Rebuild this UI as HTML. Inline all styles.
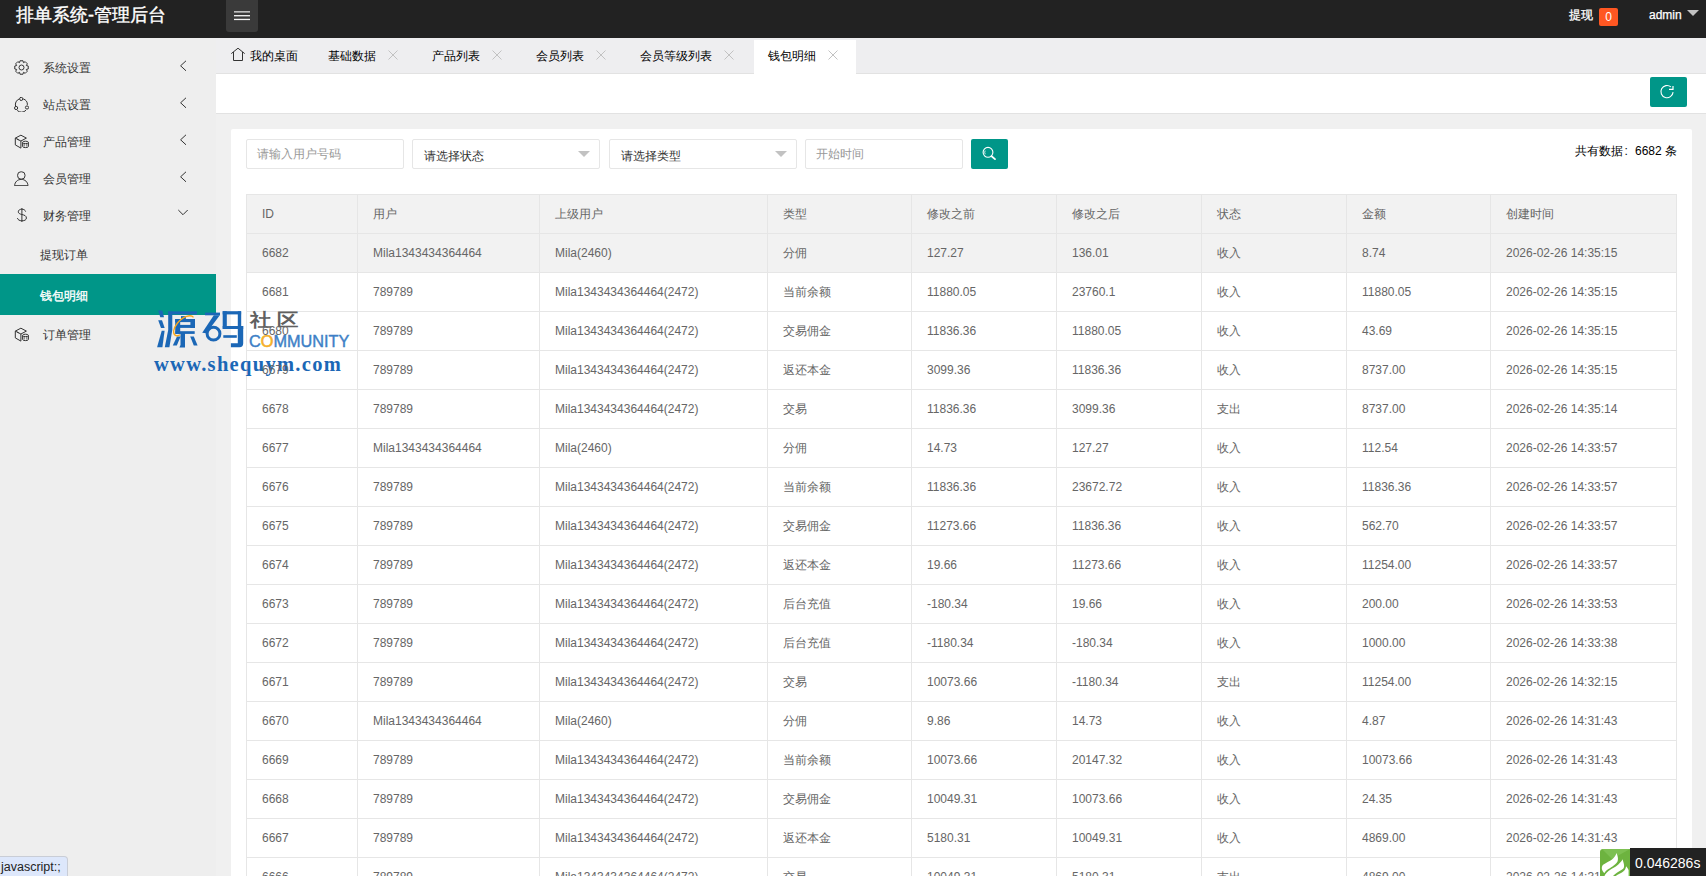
<!DOCTYPE html>
<html><head><meta charset="utf-8">
<style>
*{margin:0;padding:0;box-sizing:border-box}
html,body{width:1706px;height:876px;overflow:hidden}
body{position:relative;background:#f0f0f0;font-family:"Liberation Sans",sans-serif;font-size:12px;color:#333}
.a{position:absolute}
#hdr{position:absolute;left:0;top:0;width:1706px;height:38px;background:#222}
#side{position:absolute;left:0;top:38px;width:216px;height:838px;background:#eee}
#tabs{position:absolute;left:216px;top:38px;width:1490px;height:36px;background:#eeeef0;border-bottom:1px solid #e2e2e2}
#strip{position:absolute;left:216px;top:74px;width:1490px;height:40px;background:#fff;border-bottom:1px solid #e2e2e2}
#card{position:absolute;left:231px;top:129px;width:1461px;height:760px;background:#fff;border-radius:2px}
.mi{position:absolute;left:0;width:216px;height:37px;line-height:37px;color:#333;font-size:12px}
.mi span{position:absolute;left:43px}
.mi svg{position:absolute}
.tab{position:absolute;top:41px;height:33px;line-height:31px;color:#000;font-size:12px}
.inp{position:absolute;top:139px;height:30px;border:1px solid #e6e6e6;border-radius:2px;background:#fff;line-height:28px;font-size:12px}
.sel{line-height:32px}
.thbg{position:absolute;background:#f2f2f2}
.hl{position:absolute;height:1px;background:#e6e6e6}
.vl{position:absolute;width:1px;background:#e6e6e6}
.c{position:absolute;z-index:6;height:38px;line-height:38px;color:#666;font-size:12px;white-space:nowrap}
</style></head><body>
<div id="hdr">
  <div class="a" style="left:16px;top:0;height:30px;line-height:30px;font-size:18px;color:#fff;white-space:nowrap;-webkit-text-stroke:0.4px #fff">排单系统-管理后台</div>
  <div class="a" style="left:226px;top:0;width:32px;height:32px;background:#3a3a3a;border-radius:0 0 3px 3px"></div>
  <svg class="a" style="left:234px;top:10px" width="16" height="12" viewBox="0 0 16 12"><rect x="0" y="1.2" width="16" height="1.3" fill="#e0e0e0"/><rect x="0" y="5" width="16" height="1.4" fill="#eee"/><rect x="0" y="8.8" width="16" height="1.3" fill="#f4f4f4"/></svg>
  <div class="a" style="left:1569px;top:7px;line-height:16px;font-size:12px;color:#fff;-webkit-text-stroke:0.3px #fff">提现</div>
  <div class="a" style="left:1599px;top:8px;width:19px;height:18px;background:#ff5722;border-radius:2px;color:#fff;text-align:center;line-height:18px;font-size:12px">0</div>
  <div class="a" style="left:1649px;top:7px;line-height:16px;font-size:12px;color:#fff;-webkit-text-stroke:0.25px #fff">admin</div>
  <svg class="a" style="left:1687px;top:10px" width="12" height="6" viewBox="0 0 12 6"><path d="M0 0H12L6 6Z" fill="#c2c2c2"/></svg>
</div>
<div id="side">
<div class="mi" style="top:10px"><svg style="left:14px;top:12px" width="15" height="15" viewBox="0 0 15 15"><path d="M5.52 2.69 L5.99 0.77 L9.01 0.77 L9.48 2.69 L9.50 2.70 L11.20 1.67 L13.33 3.80 L12.30 5.50 L12.31 5.52 L14.23 5.99 L14.23 9.01 L12.31 9.48 L12.30 9.50 L13.33 11.20 L11.20 13.33 L9.50 12.30 L9.48 12.31 L9.01 14.23 L5.99 14.23 L5.52 12.31 L5.50 12.30 L3.80 13.33 L1.67 11.20 L2.70 9.50 L2.69 9.48 L0.77 9.01 L0.77 5.99 L2.69 5.52 L2.70 5.50 L1.67 3.80 L3.80 1.67 L5.50 2.70Z" fill="none" stroke="#333" stroke-width="1" stroke-linejoin="round"/><circle cx="7.5" cy="7.5" r="2.5" fill="none" stroke="#333" stroke-width="1"/></svg><span style="top:2px">系统设置</span><svg style="left:179px;top:12px" width="8" height="12" viewBox="0 0 8 12"><path d="M7 0.8L1.6 5.8L7 10.8" fill="none" stroke="#333" stroke-width="1"/></svg></div><div class="mi" style="top:47px"><svg style="left:14px;top:12px" width="15" height="15" viewBox="0 0 15 15"><path d="M9.2 1.9A6.1 6.1 0 0 1 13.4 7.9 M12.0 13.2A6.1 6.1 0 0 1 3.2 13.4 M1.6 9.3A6.1 6.1 0 0 1 5.3 1.9" fill="none" stroke="#333" stroke-width="1"/><circle cx="7.2" cy="1.9" r="1.6" fill="none" stroke="#333" stroke-width="1"/><circle cx="2.1" cy="11" r="1.6" fill="none" stroke="#333" stroke-width="1"/><circle cx="13" cy="10.5" r="1.6" fill="none" stroke="#333" stroke-width="1"/></svg><span style="top:2px">站点设置</span><svg style="left:179px;top:12px" width="8" height="12" viewBox="0 0 8 12"><path d="M7 0.8L1.6 5.8L7 10.8" fill="none" stroke="#333" stroke-width="1"/></svg></div><div class="mi" style="top:84px"><svg style="left:14px;top:12px" width="15" height="15" viewBox="0 0 15 15"><path d="M6.9 1.2L12.4 4.1L6.9 7.0L1.3 4.1Z M1.3 4.1V10.9L6.9 14.1V7.0 M3.2 5.1L4.6 5.8" fill="none" stroke="#333" stroke-width="1" stroke-linejoin="round"/><path d="M8.6 8.4V12.4A2.9 1.2 0 0 0 14.4 12.4V8.4" fill="#eee" stroke="#333" stroke-width="1"/><ellipse cx="11.5" cy="8.4" rx="2.9" ry="1.2" fill="#eee" stroke="#333" stroke-width="1"/><path d="M10.2 9.6V12.5M12.8 9.6V12.5" stroke="#333" stroke-width="0.7"/></svg><span style="top:2px">产品管理</span><svg style="left:179px;top:12px" width="8" height="12" viewBox="0 0 8 12"><path d="M7 0.8L1.6 5.8L7 10.8" fill="none" stroke="#333" stroke-width="1"/></svg></div><div class="mi" style="top:121px"><svg style="left:14px;top:12px" width="15" height="15" viewBox="0 0 15 15"><rect x="3.6" y="0.8" width="7.4" height="7.3" rx="3.3" fill="none" stroke="#333" stroke-width="1"/><path d="M0.6 14.7C0.8 10.9 3.6 8.4 7.3 8.4S13.8 10.9 14 14.7Z" fill="none" stroke="#333" stroke-width="1" stroke-linejoin="round"/></svg><span style="top:2px">会员管理</span><svg style="left:179px;top:12px" width="8" height="12" viewBox="0 0 8 12"><path d="M7 0.8L1.6 5.8L7 10.8" fill="none" stroke="#333" stroke-width="1"/></svg></div><div class="mi" style="top:158px"><svg style="left:15px;top:12px" width="15" height="15" viewBox="0 0 15 15"><path d="M10.6 3.6C10.2 2 8.8 1.2 6.8 1.2C4.6 1.2 3.3 2.3 3.3 3.8C3.3 5.4 4.8 6 6.9 6.5C9.6 7.1 11.4 7.9 11.4 10C11.4 11.8 9.7 12.8 6.9 12.8C4.5 12.8 2.8 11.7 2.4 10.1 M6.9 0V14" fill="none" stroke="#333" stroke-width="1"/></svg><span style="top:2px">财务管理</span><svg style="left:177px;top:13px" width="12" height="8" viewBox="0 0 12 8"><path d="M1.3 1L6 5.7L10.7 1" fill="none" stroke="#333" stroke-width="1"/></svg></div><div class="mi" style="top:195px;height:41px;line-height:41px"><span style="left:40px;top:2px">提现订单</span></div><div class="mi" style="top:236px;height:41px;line-height:41px;background:#009688;color:#fff"><span style="left:40px;top:2px;-webkit-text-stroke:0.35px #fff">钱包明细</span></div><div class="mi" style="top:277px"><svg style="left:14px;top:12px" width="15" height="15" viewBox="0 0 15 15"><path d="M6.9 1.2L12.4 4.1L6.9 7.0L1.3 4.1Z M1.3 4.1V10.9L6.9 14.1V7.0 M3.2 5.1L4.6 5.8" fill="none" stroke="#333" stroke-width="1" stroke-linejoin="round"/><path d="M8.6 8.4V12.4A2.9 1.2 0 0 0 14.4 12.4V8.4" fill="#eee" stroke="#333" stroke-width="1"/><ellipse cx="11.5" cy="8.4" rx="2.9" ry="1.2" fill="#eee" stroke="#333" stroke-width="1"/><path d="M10.2 9.6V12.5M12.8 9.6V12.5" stroke="#333" stroke-width="0.7"/></svg><span style="top:2px">订单管理</span></div>
</div>
<div id="tabs"></div>
<div class="a" style="left:754px;top:40px;width:102px;height:35px;background:#fff"></div>
<svg class="a" style="left:231px;top:47px" width="15" height="15" viewBox="0 0 15 15"><path d="M0.3 6.6L7 1.2L13.7 6.6 M2.5 5V13.5H11.5V5" fill="none" stroke="#333" stroke-width="1"/></svg>
<div class="tab" style="left:250px">我的桌面</div>
<div class="tab" style="left:328px">基础数据</div>
<div class="tab" style="left:432px">产品列表</div>
<div class="tab" style="left:536px">会员列表</div>
<div class="tab" style="left:640px">会员等级列表</div>
<div class="tab" style="left:768px">钱包明细</div>
<svg class="a" style="left:388px;top:50px" width="10" height="10" viewBox="0 0 10 10"><path d="M0.5 0.5L9.5 9.5M9.5 0.5L0.5 9.5" stroke="#c2c2c2" stroke-width="1"/></svg>
<svg class="a" style="left:492px;top:50px" width="10" height="10" viewBox="0 0 10 10"><path d="M0.5 0.5L9.5 9.5M9.5 0.5L0.5 9.5" stroke="#c2c2c2" stroke-width="1"/></svg>
<svg class="a" style="left:596px;top:50px" width="10" height="10" viewBox="0 0 10 10"><path d="M0.5 0.5L9.5 9.5M9.5 0.5L0.5 9.5" stroke="#c2c2c2" stroke-width="1"/></svg>
<svg class="a" style="left:724px;top:50px" width="10" height="10" viewBox="0 0 10 10"><path d="M0.5 0.5L9.5 9.5M9.5 0.5L0.5 9.5" stroke="#c2c2c2" stroke-width="1"/></svg>
<svg class="a" style="left:828px;top:50px" width="10" height="10" viewBox="0 0 10 10"><path d="M0.5 0.5L9.5 9.5M9.5 0.5L0.5 9.5" stroke="#c2c2c2" stroke-width="1"/></svg>
<div id="strip"></div>
<div class="a" style="left:1650px;top:77px;width:37px;height:30px;background:#009688;border-radius:2px"></div>
<svg class="a" style="left:1659px;top:84px" width="16" height="16" viewBox="0 0 16 16"><path d="M11.92 2.93A6.1 6.1 0 1 0 14.08 8.13" fill="none" stroke="#fff" stroke-width="1.1"/><path d="M14 2V5.4H10" fill="none" stroke="#fff" stroke-width="1.2"/></svg>
<div id="card"></div>
<div class="inp" style="left:246px;width:158px;color:#999;padding-left:10px">请输入用户号码</div>
<div class="inp sel" style="left:412px;width:188px;color:#333;padding-left:11px">请选择状态</div>
<svg class="a" style="left:578px;top:151px" width="12" height="6" viewBox="0 0 12 6"><path d="M0 0H12L6 6Z" fill="#c2c2c2"/></svg>
<div class="inp sel" style="left:609px;width:188px;color:#333;padding-left:11px">请选择类型</div>
<svg class="a" style="left:775px;top:151px" width="12" height="6" viewBox="0 0 12 6"><path d="M0 0H12L6 6Z" fill="#c2c2c2"/></svg>
<div class="inp" style="left:805px;width:158px;color:#999;padding-left:10px">开始时间</div>
<div class="a" style="left:971px;top:139px;width:37px;height:30px;background:#009688;border-radius:2px"></div>
<svg class="a" style="left:981px;top:146px" width="16" height="16" viewBox="0 0 16 16"><circle cx="7" cy="6.3" r="4.9" fill="none" stroke="#fff" stroke-width="1.1"/><path d="M4.2 4.6A3.6 3.6 0 0 0 4.2 8.2" fill="none" stroke="#fff" stroke-width="0.8"/><path d="M10.6 10.2L14 13.1" stroke="#fff" stroke-width="1.8" stroke-linecap="round"/></svg>
<div class="a" style="left:1575px;top:143px;line-height:16px;font-size:12px;color:#000;white-space:nowrap">共有数据<span style="display:inline-block;width:12px;padding-left:1.5px">:</span>6682 条</div>
<div class="thbg" style="left:246px;top:194px;width:1431px;height:40px"></div>
<div class="thbg" style="left:246px;top:233px;width:1431px;height:39px"></div>
<div class="hl" style="left:246px;top:194px;width:1431px"></div>
<div class="hl" style="left:246px;top:233px;width:1431px"></div>
<div class="hl" style="left:246px;top:272px;width:1431px"></div>
<div class="hl" style="left:246px;top:311px;width:1431px"></div>
<div class="hl" style="left:246px;top:350px;width:1431px"></div>
<div class="hl" style="left:246px;top:389px;width:1431px"></div>
<div class="hl" style="left:246px;top:428px;width:1431px"></div>
<div class="hl" style="left:246px;top:467px;width:1431px"></div>
<div class="hl" style="left:246px;top:506px;width:1431px"></div>
<div class="hl" style="left:246px;top:545px;width:1431px"></div>
<div class="hl" style="left:246px;top:584px;width:1431px"></div>
<div class="hl" style="left:246px;top:623px;width:1431px"></div>
<div class="hl" style="left:246px;top:662px;width:1431px"></div>
<div class="hl" style="left:246px;top:701px;width:1431px"></div>
<div class="hl" style="left:246px;top:740px;width:1431px"></div>
<div class="hl" style="left:246px;top:779px;width:1431px"></div>
<div class="hl" style="left:246px;top:818px;width:1431px"></div>
<div class="hl" style="left:246px;top:857px;width:1431px"></div>
<div class="hl" style="left:246px;top:896px;width:1431px"></div>
<div class="vl" style="left:246px;top:194px;height:682px"></div>
<div class="vl" style="left:357px;top:194px;height:682px"></div>
<div class="vl" style="left:539px;top:194px;height:682px"></div>
<div class="vl" style="left:767px;top:194px;height:682px"></div>
<div class="vl" style="left:911px;top:194px;height:682px"></div>
<div class="vl" style="left:1056px;top:194px;height:682px"></div>
<div class="vl" style="left:1201px;top:194px;height:682px"></div>
<div class="vl" style="left:1346px;top:194px;height:682px"></div>
<div class="vl" style="left:1490px;top:194px;height:682px"></div>
<div class="vl" style="left:1676px;top:194px;height:682px"></div>
<div class="c" style="left:262px;top:195px">ID</div><div class="c" style="left:373px;top:195px">用户</div><div class="c" style="left:555px;top:195px">上级用户</div><div class="c" style="left:783px;top:195px">类型</div><div class="c" style="left:927px;top:195px">修改之前</div><div class="c" style="left:1072px;top:195px">修改之后</div><div class="c" style="left:1217px;top:195px">状态</div><div class="c" style="left:1362px;top:195px">金额</div><div class="c" style="left:1506px;top:195px">创建时间</div>
<div class="c" style="left:262px;top:234px">6682</div><div class="c" style="left:373px;top:234px">Mila1343434364464</div><div class="c" style="left:555px;top:234px">Mila(2460)</div><div class="c" style="left:783px;top:234px">分佣</div><div class="c" style="left:927px;top:234px">127.27</div><div class="c" style="left:1072px;top:234px">136.01</div><div class="c" style="left:1217px;top:234px">收入</div><div class="c" style="left:1362px;top:234px">8.74</div><div class="c" style="left:1506px;top:234px">2026-02-26 14:35:15</div>
<div class="c" style="left:262px;top:273px">6681</div><div class="c" style="left:373px;top:273px">789789</div><div class="c" style="left:555px;top:273px">Mila1343434364464(2472)</div><div class="c" style="left:783px;top:273px">当前余额</div><div class="c" style="left:927px;top:273px">11880.05</div><div class="c" style="left:1072px;top:273px">23760.1</div><div class="c" style="left:1217px;top:273px">收入</div><div class="c" style="left:1362px;top:273px">11880.05</div><div class="c" style="left:1506px;top:273px">2026-02-26 14:35:15</div>
<div class="c" style="left:262px;top:312px">6680</div><div class="c" style="left:373px;top:312px">789789</div><div class="c" style="left:555px;top:312px">Mila1343434364464(2472)</div><div class="c" style="left:783px;top:312px">交易佣金</div><div class="c" style="left:927px;top:312px">11836.36</div><div class="c" style="left:1072px;top:312px">11880.05</div><div class="c" style="left:1217px;top:312px">收入</div><div class="c" style="left:1362px;top:312px">43.69</div><div class="c" style="left:1506px;top:312px">2026-02-26 14:35:15</div>
<div class="c" style="left:262px;top:351px">6679</div><div class="c" style="left:373px;top:351px">789789</div><div class="c" style="left:555px;top:351px">Mila1343434364464(2472)</div><div class="c" style="left:783px;top:351px">返还本金</div><div class="c" style="left:927px;top:351px">3099.36</div><div class="c" style="left:1072px;top:351px">11836.36</div><div class="c" style="left:1217px;top:351px">收入</div><div class="c" style="left:1362px;top:351px">8737.00</div><div class="c" style="left:1506px;top:351px">2026-02-26 14:35:15</div>
<div class="c" style="left:262px;top:390px">6678</div><div class="c" style="left:373px;top:390px">789789</div><div class="c" style="left:555px;top:390px">Mila1343434364464(2472)</div><div class="c" style="left:783px;top:390px">交易</div><div class="c" style="left:927px;top:390px">11836.36</div><div class="c" style="left:1072px;top:390px">3099.36</div><div class="c" style="left:1217px;top:390px">支出</div><div class="c" style="left:1362px;top:390px">8737.00</div><div class="c" style="left:1506px;top:390px">2026-02-26 14:35:14</div>
<div class="c" style="left:262px;top:429px">6677</div><div class="c" style="left:373px;top:429px">Mila1343434364464</div><div class="c" style="left:555px;top:429px">Mila(2460)</div><div class="c" style="left:783px;top:429px">分佣</div><div class="c" style="left:927px;top:429px">14.73</div><div class="c" style="left:1072px;top:429px">127.27</div><div class="c" style="left:1217px;top:429px">收入</div><div class="c" style="left:1362px;top:429px">112.54</div><div class="c" style="left:1506px;top:429px">2026-02-26 14:33:57</div>
<div class="c" style="left:262px;top:468px">6676</div><div class="c" style="left:373px;top:468px">789789</div><div class="c" style="left:555px;top:468px">Mila1343434364464(2472)</div><div class="c" style="left:783px;top:468px">当前余额</div><div class="c" style="left:927px;top:468px">11836.36</div><div class="c" style="left:1072px;top:468px">23672.72</div><div class="c" style="left:1217px;top:468px">收入</div><div class="c" style="left:1362px;top:468px">11836.36</div><div class="c" style="left:1506px;top:468px">2026-02-26 14:33:57</div>
<div class="c" style="left:262px;top:507px">6675</div><div class="c" style="left:373px;top:507px">789789</div><div class="c" style="left:555px;top:507px">Mila1343434364464(2472)</div><div class="c" style="left:783px;top:507px">交易佣金</div><div class="c" style="left:927px;top:507px">11273.66</div><div class="c" style="left:1072px;top:507px">11836.36</div><div class="c" style="left:1217px;top:507px">收入</div><div class="c" style="left:1362px;top:507px">562.70</div><div class="c" style="left:1506px;top:507px">2026-02-26 14:33:57</div>
<div class="c" style="left:262px;top:546px">6674</div><div class="c" style="left:373px;top:546px">789789</div><div class="c" style="left:555px;top:546px">Mila1343434364464(2472)</div><div class="c" style="left:783px;top:546px">返还本金</div><div class="c" style="left:927px;top:546px">19.66</div><div class="c" style="left:1072px;top:546px">11273.66</div><div class="c" style="left:1217px;top:546px">收入</div><div class="c" style="left:1362px;top:546px">11254.00</div><div class="c" style="left:1506px;top:546px">2026-02-26 14:33:57</div>
<div class="c" style="left:262px;top:585px">6673</div><div class="c" style="left:373px;top:585px">789789</div><div class="c" style="left:555px;top:585px">Mila1343434364464(2472)</div><div class="c" style="left:783px;top:585px">后台充值</div><div class="c" style="left:927px;top:585px">-180.34</div><div class="c" style="left:1072px;top:585px">19.66</div><div class="c" style="left:1217px;top:585px">收入</div><div class="c" style="left:1362px;top:585px">200.00</div><div class="c" style="left:1506px;top:585px">2026-02-26 14:33:53</div>
<div class="c" style="left:262px;top:624px">6672</div><div class="c" style="left:373px;top:624px">789789</div><div class="c" style="left:555px;top:624px">Mila1343434364464(2472)</div><div class="c" style="left:783px;top:624px">后台充值</div><div class="c" style="left:927px;top:624px">-1180.34</div><div class="c" style="left:1072px;top:624px">-180.34</div><div class="c" style="left:1217px;top:624px">收入</div><div class="c" style="left:1362px;top:624px">1000.00</div><div class="c" style="left:1506px;top:624px">2026-02-26 14:33:38</div>
<div class="c" style="left:262px;top:663px">6671</div><div class="c" style="left:373px;top:663px">789789</div><div class="c" style="left:555px;top:663px">Mila1343434364464(2472)</div><div class="c" style="left:783px;top:663px">交易</div><div class="c" style="left:927px;top:663px">10073.66</div><div class="c" style="left:1072px;top:663px">-1180.34</div><div class="c" style="left:1217px;top:663px">支出</div><div class="c" style="left:1362px;top:663px">11254.00</div><div class="c" style="left:1506px;top:663px">2026-02-26 14:32:15</div>
<div class="c" style="left:262px;top:702px">6670</div><div class="c" style="left:373px;top:702px">Mila1343434364464</div><div class="c" style="left:555px;top:702px">Mila(2460)</div><div class="c" style="left:783px;top:702px">分佣</div><div class="c" style="left:927px;top:702px">9.86</div><div class="c" style="left:1072px;top:702px">14.73</div><div class="c" style="left:1217px;top:702px">收入</div><div class="c" style="left:1362px;top:702px">4.87</div><div class="c" style="left:1506px;top:702px">2026-02-26 14:31:43</div>
<div class="c" style="left:262px;top:741px">6669</div><div class="c" style="left:373px;top:741px">789789</div><div class="c" style="left:555px;top:741px">Mila1343434364464(2472)</div><div class="c" style="left:783px;top:741px">当前余额</div><div class="c" style="left:927px;top:741px">10073.66</div><div class="c" style="left:1072px;top:741px">20147.32</div><div class="c" style="left:1217px;top:741px">收入</div><div class="c" style="left:1362px;top:741px">10073.66</div><div class="c" style="left:1506px;top:741px">2026-02-26 14:31:43</div>
<div class="c" style="left:262px;top:780px">6668</div><div class="c" style="left:373px;top:780px">789789</div><div class="c" style="left:555px;top:780px">Mila1343434364464(2472)</div><div class="c" style="left:783px;top:780px">交易佣金</div><div class="c" style="left:927px;top:780px">10049.31</div><div class="c" style="left:1072px;top:780px">10073.66</div><div class="c" style="left:1217px;top:780px">收入</div><div class="c" style="left:1362px;top:780px">24.35</div><div class="c" style="left:1506px;top:780px">2026-02-26 14:31:43</div>
<div class="c" style="left:262px;top:819px">6667</div><div class="c" style="left:373px;top:819px">789789</div><div class="c" style="left:555px;top:819px">Mila1343434364464(2472)</div><div class="c" style="left:783px;top:819px">返还本金</div><div class="c" style="left:927px;top:819px">5180.31</div><div class="c" style="left:1072px;top:819px">10049.31</div><div class="c" style="left:1217px;top:819px">收入</div><div class="c" style="left:1362px;top:819px">4869.00</div><div class="c" style="left:1506px;top:819px">2026-02-26 14:31:43</div>
<div class="c" style="left:262px;top:858px">6666</div><div class="c" style="left:373px;top:858px">789789</div><div class="c" style="left:555px;top:858px">Mila1343434364464(2472)</div><div class="c" style="left:783px;top:858px">交易</div><div class="c" style="left:927px;top:858px">10049.31</div><div class="c" style="left:1072px;top:858px">5180.31</div><div class="c" style="left:1217px;top:858px">支出</div><div class="c" style="left:1362px;top:858px">4869.00</div><div class="c" style="left:1506px;top:858px">2026-02-26 14:31:36</div>
<div class="a" style="z-index:10;left:0;top:856px;width:68px;height:22px;background:#dde7fb;border:1px solid #c9cdd6;border-left:none;border-radius:0 4px 0 0;font-size:12.5px;line-height:20px;color:#222;padding-left:1px">javascript:;</div>
<svg class="a" style="left:1600px;top:849px;z-index:10" width="30" height="27" viewBox="0 0 30 27"><path d="M3 0H30V27H0V3Q0 0 3 0Z" fill="#6db33f"/><path d="M2 0H30L12 10Z" fill="#7dc052"/>
<path d="M16.5 4.1C15.5 7 14.4 8.7 12 10.5C10 12 5.5 14 3.1 15.8C1.8 17 1.6 19 2 20.5C2.4 22 3.4 23.4 4.5 24C5.8 22 7 21 8.4 20.1C10.5 18.8 12 17.8 13.7 16.5C15.5 15.2 16.8 14 17.5 12.5C18.2 10.5 18.1 8 17.2 5.9Z" fill="#fff"/>
<path d="M22.5 10.2C21.8 11.8 20.8 13 19 14.8C17.8 16 16.5 17.2 14.5 18.3C12.5 19.5 10.2 20.8 8.5 22C7.2 23 6 24.3 5.2 25.5L4.5 27H13C14.2 26 15.5 24.8 17.2 23.6C19 22.4 21.2 21.3 22.9 20.1C24 19 24.2 17.5 24 15.8C23.8 14 23.2 12.5 22.5 10.2Z" fill="#fff"/>
<path d="M26.1 17.2C25.8 19 25.2 20.5 24.3 21.5C23 23 21 24 19 25C17.5 25.8 16.5 26.4 15.8 27H28.6V21C28 19.5 27 18.2 26.1 17.2Z" fill="#fff"/></svg>
<div class="a" style="z-index:10;left:1630px;top:848px;width:76px;height:28px;background:#222;color:#fff;font-size:14px;line-height:22px;padding-left:5px;padding-top:4px">0.046286s</div>
<svg class="a" style="left:150px;top:305px;z-index:5" width="100" height="50" viewBox="0 0 100 50">
<g fill="#1b67b6">
<polygon points="8.2,5.6 12.3,5.6 14,12.3 10.3,12.3"/>
<polygon points="8.2,15.2 12,15.2 14.7,22.9 11,22.9"/>
<polygon points="11.7,25.8 14.6,25.8 12.4,42.3 7.1,42.3"/>
<rect x="18.2" y="6.4" width="28.8" height="3"/>
<polygon points="18.2,6.4 22.3,6.4 22.3,25 19.4,42.3 14.8,42.3 18.2,25"/>
<rect x="31" y="11.1" width="4.9" height="3"/>
<rect x="25.2" y="14" width="19.8" height="3.1"/>
<rect x="25.2" y="14" width="5" height="14.9"/>
<rect x="40.4" y="14" width="4.6" height="8.9"/>
<rect x="25.2" y="19.9" width="19.8" height="3"/>
<rect x="25.5" y="26.2" width="19.2" height="2.7"/>
<polygon points="30.5,28 35,28 35,42.6 29.4,42.6 30.5,40"/>
<polygon points="27,31.6 30.6,31.6 26.8,40.6 22.8,40.6"/>
<polygon points="40.2,31.6 43.8,31.6 47.6,40.6 43.8,40.6"/>
<rect x="55" y="7.6" width="15" height="2.7"/>
<polygon points="63.8,10.3 69.8,10.3 56.3,28.3 52.2,27.8"/>
<rect x="72.7" y="6.2" width="18.4" height="3.2"/>
<rect x="72.7" y="6.2" width="4.1" height="17.6"/>
<rect x="72.7" y="21" width="20.5" height="3"/>
<path d="M87.8 6.2H91.2V21H93.2V38.5Q93.2 42.2 89.5 42.2H80.9V38.2H87.8Z"/>
<rect x="73.3" y="30.2" width="13.5" height="2.6"/>
</g>
<circle cx="63.5" cy="28.7" r="6.4" fill="none" stroke="#1b67b6" stroke-width="3"/>
<path d="M43.5 12.4C41 9 33 11 27.5 18C23 23.5 22.5 29 25.5 30.3C27 31 29 30.6 30.2 29.8" fill="none" stroke="#f9a81b" stroke-width="1.3"/>
</svg>
<div class="a" style="left:250px;top:307px;font-size:22px;font-weight:bold;color:#606060;line-height:32px;white-space:nowrap;letter-spacing:5px;transform:scaleY(0.84);transform-origin:0 0;z-index:5">社区</div>
<div class="a" style="left:249px;top:332px;font-size:16.3px;color:#3d7fc6;-webkit-text-stroke:0.4px #3d7fc6;line-height:18px;white-space:nowrap;z-index:5">C<span style="color:#f5b02a;-webkit-text-stroke:0.6px #f5b02a">O</span>MMUNITY</div>
<div class="a" style="left:154px;top:352px;font-family:'Liberation Serif',serif;font-size:20.5px;font-weight:bold;color:#1b67b6;line-height:24px;white-space:nowrap;letter-spacing:1.3px;z-index:5">www.shequym.com</div>
</body></html>
